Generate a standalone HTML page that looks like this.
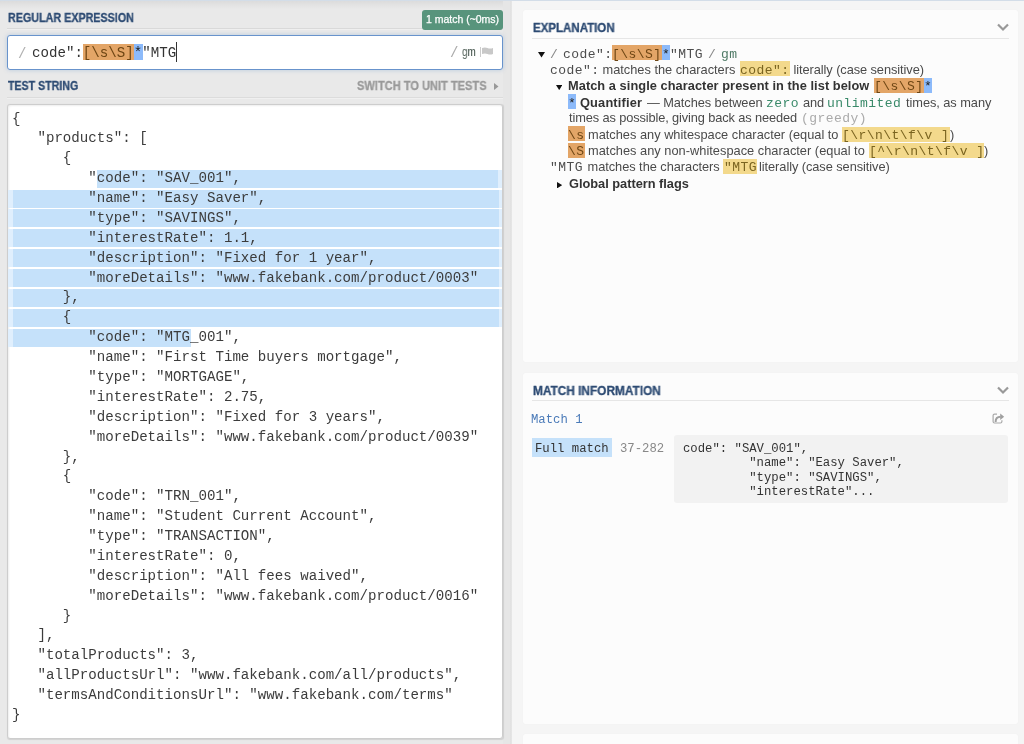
<!DOCTYPE html>
<html><head><meta charset="utf-8">
<style>
*{margin:0;padding:0;box-sizing:border-box}
html,body{width:1024px;height:744px;overflow:hidden;background:#e9e9e9;position:relative;font-family:"Liberation Sans",sans-serif}
.abs{position:absolute}
.mono{font-family:"Liberation Mono",monospace}
.hdr{position:absolute;font-weight:bold;font-size:12px;color:#2d4b73;-webkit-text-stroke:0.3px currentColor;white-space:nowrap;transform-origin:0 0;line-height:14px}
.sep{position:absolute;height:1px;background:#d6d6d6}
#left{position:absolute;left:0;top:0;width:512px;height:744px;background:#e9e9e9}
#right{position:absolute;left:512px;top:0;width:512px;height:744px;background:#f5f5f5}
.card{position:absolute;left:523px;width:495px;background:#fcfcfc;border-radius:2px;box-shadow:0 0 1px rgba(0,0,0,.07)}
.ts{position:absolute;left:12.08px;font-family:"Liberation Mono",monospace;font-size:14.13px;line-height:19.88px;height:19.88px;white-space:pre;color:#3c3c3c}
.hl{position:absolute;height:18px;background:#c5e1fa}
.hll{position:absolute;height:18px;background:#e0effd}
.ex{position:absolute;white-space:pre;font-size:12.8px;color:#555;line-height:16px;height:16px}
.em{font-family:"Liberation Mono",monospace;font-size:13.75px}
.org{background:#e3a567;color:#6e4614}
.blu{background:#8cbafa;color:#222}
.yel{background:#f5dc92;color:#6b5a22}
.grn{color:#328264}
.b{font-weight:bold;color:#444}
body>div,body>svg{will-change:transform}
</style></head><body>
<div id="left"></div>
<div class="abs" style="left:503px;top:0;width:9px;height:744px;background:linear-gradient(to right,#e6e6e6 0,#e6e6e6 7px,#dddddd 8px,#ececec 9px)"></div>
<div id="right"></div>
<div class="abs" style="left:0;top:0;width:1024px;height:1px;background:#d3dde8"></div>
<div class="abs" style="left:0;top:1px;width:503px;height:8px;background:linear-gradient(#dcdcdc,#e9e9e9)"></div>

<!-- REGULAR EXPRESSION header -->
<div class="hdr" style="left:7.5px;top:11px;transform:scaleX(0.895)">REGULAR EXPRESSION</div>
<div class="sep" style="left:7px;top:28px;width:415px;background:#d9d9d9"></div><div class="sep" style="left:7px;top:29px;width:415px;background:#efefef"></div>
<div class="abs" style="left:422px;top:10px;width:81px;height:19.5px;background:#58947c;border-radius:3px;color:#fff;font-size:10.5px;line-height:19.5px;-webkit-text-stroke:0.25px #fff;text-align:center;white-space:nowrap">1 match (~0ms)</div>

<!-- regex input -->
<div class="abs" style="left:7px;top:35px;width:496px;height:34.8px;background:#fff;border:1.5px solid #6893cc;border-radius:3px;box-shadow:0 0 4px rgba(90,140,200,.35)"></div>
<div class="abs mono" style="left:18px;top:46px;font-size:14px;color:#b0b0b0;line-height:16px">/</div>
<div class="abs" style="left:82.7px;top:44.1px;width:50.9px;height:16.1px;background:#e3a567"></div><div class="abs" style="left:133.6px;top:44.1px;width:8.6px;height:16.1px;background:#8cbafa"></div>
<div class="abs mono" style="left:31.8px;top:45px;font-size:14.13px;line-height:16px;color:#333;white-space:pre">code":<span style="color:#6e4614">[\s\S]</span><span style="color:#222">*</span>"MTG</div>
<div class="abs" style="left:176px;top:42px;width:1px;height:20px;background:#333"></div>
<div class="abs mono" style="left:450px;top:45px;font-size:14px;color:#aaa;line-height:16px">/</div>
<div class="abs" style="left:461.5px;top:44px;font-size:13px;color:#4a5a52;line-height:16px;transform:scaleX(0.76);transform-origin:0 0">gm</div>
<div class="abs" style="left:480px;top:47px;width:1px;height:10px;background:#ccc"></div>
<svg class="abs" style="left:482px;top:47px" width="11" height="9" viewBox="0 0 11 9"><path d="M0 1 Q3 0 5.5 1 T11 1 V7 Q8 8 5.5 7 T0 7 Z" fill="#c8c8c8"/></svg>

<!-- TEST STRING header -->
<div class="hdr" style="left:7.5px;top:79px;transform:scaleX(0.886)">TEST STRING</div>
<div class="hdr" style="left:357px;top:79px;color:#999;transform:scaleX(0.923)">SWITCH TO UNIT TESTS</div>
<svg class="abs" style="left:494px;top:83px" width="5" height="7" viewBox="0 0 5 7"><path d="M0 0 L4.5 3.5 L0 7Z" fill="#999"/></svg>
<div class="sep" style="left:7px;top:97px;width:496px;background:#dcdcdc"></div><div class="sep" style="left:7px;top:98px;width:496px;background:#f0f0f0"></div>

<!-- test string box -->
<div class="abs" style="left:7px;top:104px;width:496px;height:635px;background:#fff;border:1px solid #cdcdcd;border-radius:3px;box-shadow:inset 1px 1px 2px rgba(0,0,0,.07),0.5px 0.5px 1px rgba(0,0,0,.1)"></div>
<div class="hl" style="left:96.88px;top:169.70px;width:401.12px"></div>
<div class="hll" style="left:498px;top:169.70px;width:4px"></div>
<div class="hll" style="left:8px;top:189.58px;width:494px"></div>
<div class="hl" style="left:12.5px;top:189.58px;width:485.5px"></div>
<div class="hll" style="left:8px;top:209.46px;width:494px"></div>
<div class="hl" style="left:12.5px;top:209.46px;width:485.5px"></div>
<div class="hll" style="left:8px;top:229.34px;width:494px"></div>
<div class="hl" style="left:12.5px;top:229.34px;width:485.5px"></div>
<div class="hll" style="left:8px;top:249.22px;width:494px"></div>
<div class="hl" style="left:12.5px;top:249.22px;width:485.5px"></div>
<div class="hll" style="left:8px;top:269.10px;width:494px"></div>
<div class="hl" style="left:12.5px;top:269.10px;width:485.5px"></div>
<div class="hll" style="left:8px;top:288.98px;width:494px"></div>
<div class="hl" style="left:12.5px;top:288.98px;width:485.5px"></div>
<div class="hll" style="left:8px;top:308.86px;width:494px"></div>
<div class="hl" style="left:12.5px;top:308.86px;width:485.5px"></div>
<div class="hll" style="left:8px;top:328.74px;width:4.5px"></div>
<div class="hl" style="left:12.5px;top:328.74px;width:177.66px"></div>
<div class="ts" style="top:109.57px">{</div>
<div class="ts" style="top:129.45px">   &quot;products&quot;: [</div>
<div class="ts" style="top:149.33px">      {</div>
<div class="ts" style="top:169.21px">         &quot;code&quot;: &quot;SAV_001&quot;,</div>
<div class="ts" style="top:189.09px">         &quot;name&quot;: &quot;Easy Saver&quot;,</div>
<div class="ts" style="top:208.97px">         &quot;type&quot;: &quot;SAVINGS&quot;,</div>
<div class="ts" style="top:228.85px">         &quot;interestRate&quot;: 1.1,</div>
<div class="ts" style="top:248.73px">         &quot;description&quot;: &quot;Fixed for 1 year&quot;,</div>
<div class="ts" style="top:268.61px">         &quot;moreDetails&quot;: &quot;www.fakebank.com/product/0003&quot;</div>
<div class="ts" style="top:288.49px">      },</div>
<div class="ts" style="top:308.37px">      {</div>
<div class="ts" style="top:328.25px">         &quot;code&quot;: &quot;MTG_001&quot;,</div>
<div class="ts" style="top:348.13px">         &quot;name&quot;: &quot;First Time buyers mortgage&quot;,</div>
<div class="ts" style="top:368.01px">         &quot;type&quot;: &quot;MORTGAGE&quot;,</div>
<div class="ts" style="top:387.89px">         &quot;interestRate&quot;: 2.75,</div>
<div class="ts" style="top:407.77px">         &quot;description&quot;: &quot;Fixed for 3 years&quot;,</div>
<div class="ts" style="top:427.65px">         &quot;moreDetails&quot;: &quot;www.fakebank.com/product/0039&quot;</div>
<div class="ts" style="top:447.53px">      },</div>
<div class="ts" style="top:467.41px">      {</div>
<div class="ts" style="top:487.29px">         &quot;code&quot;: &quot;TRN_001&quot;,</div>
<div class="ts" style="top:507.17px">         &quot;name&quot;: &quot;Student Current Account&quot;,</div>
<div class="ts" style="top:527.05px">         &quot;type&quot;: &quot;TRANSACTION&quot;,</div>
<div class="ts" style="top:546.93px">         &quot;interestRate&quot;: 0,</div>
<div class="ts" style="top:566.81px">         &quot;description&quot;: &quot;All fees waived&quot;,</div>
<div class="ts" style="top:586.69px">         &quot;moreDetails&quot;: &quot;www.fakebank.com/product/0016&quot;</div>
<div class="ts" style="top:606.57px">      }</div>
<div class="ts" style="top:626.45px">   ],</div>
<div class="ts" style="top:646.33px">   &quot;totalProducts&quot;: 3,</div>
<div class="ts" style="top:666.21px">   &quot;allProductsUrl&quot;: &quot;www.fakebank.com/all/products&quot;,</div>
<div class="ts" style="top:686.09px">   &quot;termsAndConditionsUrl&quot;: &quot;www.fakebank.com/terms&quot;</div>
<div class="ts" style="top:705.97px">}</div>

<!-- right cards -->
<div class="card" style="top:10px;height:352px"></div>
<div class="card" style="top:373px;height:351px"></div>
<div class="card" style="top:734px;height:20px"></div>

<div class="hdr" style="left:532.5px;top:21px;transform:scaleX(0.959)">EXPLANATION</div>
<div class="sep" style="left:532px;top:38px;width:477px;background:#e6e6e6"></div>
<svg class="abs" style="left:997px;top:23px" width="12" height="9" viewBox="0 0 12 9"><path d="M1 1.5 L6 6.5 L11 1.5" stroke="#999" stroke-width="2.2" fill="none"/></svg>

<svg class="abs" style="left:538px;top:51.9px" width="7.00" height="5.50" viewBox="0 0 7.00 5.50"><path d="M0 0 H7.00 L3.50 5.50Z" fill="#111"/></svg>
<div class="abs" style="left:549.80px;top:44.84px;font-size:13.0px;line-height:20.0px;font-family:'Liberation Mono',monospace;color:#888;letter-spacing:0.450px;white-space:pre">/</div>
<div class="abs" style="left:612.20px;top:45.20px;width:49.50px;height:14.80px;background:#e3a567"></div>
<div class="abs" style="left:661.70px;top:45.20px;width:8.25px;height:14.80px;background:#8cbafa"></div>
<div class="abs" style="left:562.70px;top:44.84px;font-size:13.0px;line-height:20.0px;font-family:'Liberation Mono',monospace;color:#4d4d4d;letter-spacing:0.450px;white-space:pre">code&quot;:</div>
<div class="abs" style="left:612.20px;top:44.84px;font-size:13.0px;line-height:20.0px;font-family:'Liberation Mono',monospace;color:#6e4614;letter-spacing:0.450px;white-space:pre">[\s\S]</div>
<div class="abs" style="left:661.70px;top:44.84px;font-size:13.0px;line-height:20.0px;font-family:'Liberation Mono',monospace;color:#222;letter-spacing:0.450px;white-space:pre">*</div>
<div class="abs" style="left:669.95px;top:44.84px;font-size:13.0px;line-height:20.0px;font-family:'Liberation Mono',monospace;color:#4d4d4d;letter-spacing:0.450px;white-space:pre">&quot;MTG</div>
<div class="abs" style="left:707.60px;top:44.84px;font-size:13.0px;line-height:20.0px;font-family:'Liberation Mono',monospace;color:#888;letter-spacing:0.450px;white-space:pre">/</div>
<div class="abs" style="left:720.70px;top:44.84px;font-size:13.0px;line-height:20.0px;font-family:'Liberation Mono',monospace;color:#4f7a66;letter-spacing:0.450px;white-space:pre">gm</div>
<div class="abs" style="left:550.00px;top:60.94px;font-size:13.0px;line-height:20.0px;font-family:'Liberation Mono',monospace;color:#4d4d4d;letter-spacing:0.450px;white-space:pre">code&quot;:</div>
<div class="abs" style="left:599.20px;top:59.96px;font-size:12.8px;line-height:20.0px;font-family:'Liberation Sans',sans-serif;color:#4a4a4a;letter-spacing:-0.009px;white-space:pre"> matches the characters </div>
<div class="abs" style="left:739.50px;top:61.30px;width:49.50px;height:14.80px;background:#f3d98c"></div>
<div class="abs" style="left:739.50px;top:60.94px;font-size:13.0px;line-height:20.0px;font-family:'Liberation Mono',monospace;color:#7a6420;letter-spacing:0.450px;white-space:pre">code&quot;:</div>
<div class="abs" style="left:789.50px;top:59.96px;font-size:12.8px;line-height:20.0px;font-family:'Liberation Sans',sans-serif;color:#4a4a4a;letter-spacing:-0.073px;white-space:pre"> literally (case sensitive)</div>
<svg class="abs" style="left:556.3px;top:84.7px" width="6.40" height="5.10" viewBox="0 0 6.40 5.10"><path d="M0 0 H6.40 L3.20 5.10Z" fill="#111"/></svg>
<div class="abs" style="left:568.20px;top:75.96px;font-size:12.8px;line-height:20.0px;font-family:'Liberation Sans',sans-serif;color:#333;font-weight:bold;letter-spacing:0.053px;white-space:pre">Match a single character present in the list below</div>
<div class="abs" style="left:874.20px;top:77.90px;width:49.55px;height:14.50px;background:#e3a567"></div>
<div class="abs" style="left:923.75px;top:77.90px;width:8.15px;height:14.50px;background:#8cbafa"></div>
<div class="abs" style="left:874.20px;top:76.94px;font-size:13.0px;line-height:20.0px;font-family:'Liberation Mono',monospace;color:#6e4614;letter-spacing:0.450px;white-space:pre">[\s\S]</div>
<div class="abs" style="left:923.75px;top:76.94px;font-size:13.0px;line-height:20.0px;font-family:'Liberation Mono',monospace;color:#222;letter-spacing:0.450px;white-space:pre">*</div>
<div class="abs" style="left:568.40px;top:94.00px;width:8.10px;height:14.90px;background:#8cbafa"></div>
<div class="abs" style="left:568.40px;top:93.54px;font-size:13.0px;line-height:20.0px;font-family:'Liberation Mono',monospace;color:#222;letter-spacing:0.450px;white-space:pre">*</div>
<div class="abs" style="left:580.40px;top:92.56px;font-size:12.8px;line-height:20.0px;font-family:'Liberation Sans',sans-serif;color:#333;font-weight:bold;letter-spacing:0.167px;white-space:pre">Quantifier</div>
<div class="abs" style="left:647.00px;top:92.56px;font-size:12.8px;line-height:20.0px;font-family:'Liberation Sans',sans-serif;color:#4a4a4a;letter-spacing:-0.069px;white-space:pre">— Matches between</div>
<div class="abs" style="left:765.70px;top:93.54px;font-size:13.0px;line-height:20.0px;font-family:'Liberation Mono',monospace;color:#3a8a6a;letter-spacing:0.450px;white-space:pre">zero</div>
<div class="abs" style="left:803.00px;top:92.56px;font-size:12.8px;line-height:20.0px;font-family:'Liberation Sans',sans-serif;color:#4a4a4a;letter-spacing:-0.100px;white-space:pre">and</div>
<div class="abs" style="left:827.40px;top:93.54px;font-size:13.0px;line-height:20.0px;font-family:'Liberation Mono',monospace;color:#3a8a6a;letter-spacing:0.450px;white-space:pre">unlimited</div>
<div class="abs" style="left:905.60px;top:92.56px;font-size:12.8px;line-height:20.0px;font-family:'Liberation Sans',sans-serif;color:#4a4a4a;letter-spacing:-0.054px;white-space:pre">times, as many</div>
<div class="abs" style="left:569.30px;top:108.46px;font-size:12.8px;line-height:20.0px;font-family:'Liberation Sans',sans-serif;color:#4a4a4a;letter-spacing:-0.115px;white-space:pre">times as possible, giving back as needed</div>
<div class="abs" style="left:801.20px;top:109.44px;font-size:13.0px;line-height:20.0px;font-family:'Liberation Mono',monospace;color:#aaa;letter-spacing:0.450px;white-space:pre">(greedy)</div>
<div class="abs" style="left:568.10px;top:126.30px;width:16.60px;height:14.50px;background:#e3a567"></div>
<div class="abs" style="left:568.30px;top:126.44px;font-size:13.0px;line-height:20.0px;font-family:'Liberation Mono',monospace;color:#6e4614;letter-spacing:0.450px;white-space:pre">\s</div>
<div class="abs" style="left:587.90px;top:125.46px;font-size:12.8px;line-height:20.0px;font-family:'Liberation Sans',sans-serif;color:#4a4a4a;letter-spacing:0.002px;white-space:pre">matches any whitespace character (equal to</div>
<div class="abs" style="left:842.10px;top:126.80px;width:108.20px;height:14.80px;background:#f3d98c"></div>
<div class="abs" style="left:842.10px;top:126.44px;font-size:13.0px;line-height:20.0px;font-family:'Liberation Mono',monospace;color:#7a6420;letter-spacing:0.450px;white-space:pre">[\r\n\t\f\v ]</div>
<div class="abs" style="left:950.30px;top:125.46px;font-size:12.8px;line-height:20.0px;font-family:'Liberation Sans',sans-serif;color:#4a4a4a;white-space:pre">)</div>
<div class="abs" style="left:568.10px;top:142.70px;width:16.60px;height:14.90px;background:#e3a567"></div>
<div class="abs" style="left:568.30px;top:142.34px;font-size:13.0px;line-height:20.0px;font-family:'Liberation Mono',monospace;color:#6e4614;letter-spacing:0.450px;white-space:pre">\S</div>
<div class="abs" style="left:587.90px;top:141.36px;font-size:12.8px;line-height:20.0px;font-family:'Liberation Sans',sans-serif;color:#4a4a4a;letter-spacing:0.018px;white-space:pre">matches any non-whitespace character (equal to</div>
<div class="abs" style="left:869.00px;top:142.70px;width:115.30px;height:14.80px;background:#f3d98c"></div>
<div class="abs" style="left:869.00px;top:142.34px;font-size:13.0px;line-height:20.0px;font-family:'Liberation Mono',monospace;color:#7a6420;letter-spacing:0.450px;white-space:pre">[^\r\n\t\f\v ]</div>
<div class="abs" style="left:984.30px;top:141.36px;font-size:12.8px;line-height:20.0px;font-family:'Liberation Sans',sans-serif;color:#4a4a4a;white-space:pre">)</div>
<div class="abs" style="left:550.00px;top:158.24px;font-size:13.0px;line-height:20.0px;font-family:'Liberation Mono',monospace;color:#4d4d4d;letter-spacing:0.450px;white-space:pre">&quot;MTG</div>
<div class="abs" style="left:583.50px;top:157.26px;font-size:12.8px;line-height:20.0px;font-family:'Liberation Sans',sans-serif;color:#4a4a4a;letter-spacing:-0.039px;white-space:pre"> matches the characters </div>
<div class="abs" style="left:723.10px;top:158.60px;width:33.90px;height:14.80px;background:#f3d98c"></div>
<div class="abs" style="left:723.60px;top:158.24px;font-size:13.0px;line-height:20.0px;font-family:'Liberation Mono',monospace;color:#7a6420;letter-spacing:0.450px;white-space:pre">&quot;MTG</div>
<div class="abs" style="left:759.30px;top:157.26px;font-size:12.8px;line-height:20.0px;font-family:'Liberation Sans',sans-serif;color:#4a4a4a;letter-spacing:-0.060px;white-space:pre">literally (case sensitive)</div>
<svg class="abs" style="left:556.6px;top:181.5px" width="5.30" height="6.40" viewBox="0 0 5.30 6.40"><path d="M0 0 L5.30 3.20 L0 6.40Z" fill="#111"/></svg>
<div class="abs" style="left:569.20px;top:173.56px;font-size:12.8px;line-height:20.0px;font-family:'Liberation Sans',sans-serif;color:#333;font-weight:bold;letter-spacing:-0.016px;white-space:pre">Global pattern flags</div>

<div class="hdr" style="left:532.5px;top:384px;transform:scaleX(0.987)">MATCH INFORMATION</div>
<div class="sep" style="left:532px;top:400px;width:477px;background:#e6e6e6"></div>
<svg class="abs" style="left:997px;top:386px" width="12" height="9" viewBox="0 0 12 9"><path d="M1 1.5 L6 6.5 L11 1.5" stroke="#999" stroke-width="2.2" fill="none"/></svg>

<div class="abs" style="left:531.20px;top:410.23px;font-size:12.27px;line-height:20.0px;font-family:'Liberation Mono',monospace;color:#4a7ab8;white-space:pre">Match 1</div>
<svg class="abs" style="left:992px;top:413px" width="13" height="11" viewBox="0 0 13 11"><path d="M5 1.1 H2.6 Q1.1 1.1 1.1 2.6 V8.5 Q1.1 10 2.6 10 H8.4 Q9.9 10 9.9 8.5 V7.2" fill="none" stroke="#aaa" stroke-width="1.2"/><path d="M3.6 9 Q3.6 3.8 8.6 3.8" fill="none" stroke="#a0a0a0" stroke-width="2"/><path d="M8.2 0.6 L12.2 3.8 L8.2 7Z" fill="#a0a0a0"/></svg>
<div class="abs" style="left:532.00px;top:438.00px;width:79.60px;height:18.80px;background:#c5e1fa"></div>
<div class="abs" style="left:535.20px;top:438.93px;font-size:12.27px;line-height:20.0px;font-family:'Liberation Mono',monospace;color:#333;white-space:pre">Full match</div>
<div class="abs" style="left:620.00px;top:438.93px;font-size:12.27px;line-height:20.0px;font-family:'Liberation Mono',monospace;color:#888;white-space:pre">37-282</div>
<div class="abs" style="left:674px;top:435.3px;width:334.4px;height:67.7px;background:#f2f2f2;border-radius:3px"></div>
<div class="abs" style="left:683.00px;top:439.03px;font-size:12.27px;line-height:20.0px;font-family:'Liberation Mono',monospace;color:#333;white-space:pre">code&quot;: &quot;SAV_001&quot;,</div>
<div class="abs" style="left:683.00px;top:453.28px;font-size:12.27px;line-height:20.0px;font-family:'Liberation Mono',monospace;color:#333;white-space:pre">         &quot;name&quot;: &quot;Easy Saver&quot;,</div>
<div class="abs" style="left:683.00px;top:467.53px;font-size:12.27px;line-height:20.0px;font-family:'Liberation Mono',monospace;color:#333;white-space:pre">         &quot;type&quot;: &quot;SAVINGS&quot;,</div>
<div class="abs" style="left:683.00px;top:481.78px;font-size:12.27px;line-height:20.0px;font-family:'Liberation Mono',monospace;color:#333;white-space:pre">         &quot;interestRate&quot;...</div>
</body></html>
